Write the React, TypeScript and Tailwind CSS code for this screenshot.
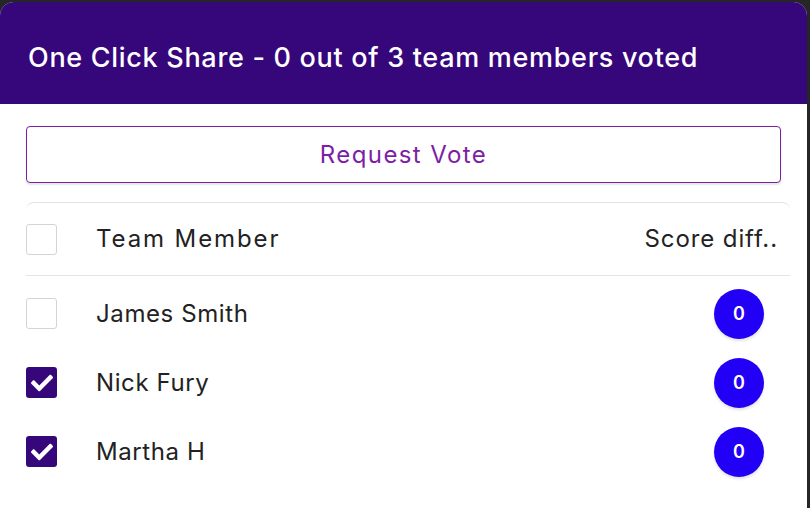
import React from "react";
import { FaCheck } from "react-icons/fa";

type Member = { name: string; checked: boolean; score: number };

const members: Member[] = [
  { name: "James Smith", checked: false, score: 0 },
  { name: "Nick Fury", checked: true, score: 0 },
  { name: "Martha H", checked: true, score: 0 },
];

function Box({ checked }: { checked: boolean }) {
  if (!checked) {
    return <div className="w-[31px] h-[31px] rounded-[3px] border border-[#d4d4d4] bg-white shrink-0" />;
  }
  return (
    <div className="w-[31px] h-[31px] rounded-[3px] bg-[#35077b] flex items-center justify-center shrink-0">
      <FaCheck className="text-white w-[22px] h-[22px]" />
    </div>
  );
}

export default function App() {
  return (
    <div className="w-[810px] h-[508px] bg-[#262626] pt-[2px] overflow-hidden" style={{ fontFamily: "Inter, 'Open Sans', sans-serif" }}>
      <div className="w-[807px] h-[520px] bg-white rounded-[14px] overflow-hidden">
        <div className="h-[102px] bg-[#35077b] flex items-center pt-[10px] px-[28px]">
          <h1 className="text-white text-[27px] font-medium tracking-[0.7px]">
            One Click Share - 0 out of 3 team members voted
          </h1>
        </div>

        <div className="px-[26px] pt-[22px]">
          <button className="w-[755px] h-[57px] rounded-[4px] border border-[#7d1fa3] text-[#7d1fa3] text-[24px] tracking-[1.4px] shadow-[0_2px_2px_rgba(0,0,0,0.1)] bg-white">
            Request Vote
          </button>

          <div className="mt-[19px] w-[764px] border-t border-[#e2e2e2] rounded-t-[8px] text-[24px] tracking-[0.6px] text-[#222]">
            <div className="h-[73px] flex items-center border-b border-[#e4e4e4]">
              <Box checked={false} />
              <span className="ml-[39px] tracking-[1.9px]">Team Member</span>
              <span className="ml-auto mr-[12px] tracking-[0.9px]">Score diff..</span>
            </div>

            <div className="flex flex-col pt-[3px]">
              {members.map((m) => (
                <div key={m.name} className="h-[69px] flex items-center">
                  <Box checked={m.checked} />
                  <span className="ml-[39px]">{m.name}</span>
                  <div className="ml-auto mr-[26px] w-[50px] h-[50px] rounded-full bg-[#2200f5] flex items-center justify-center text-white text-[18px] tracking-normal font-semibold shadow-[0_2px_3px_rgba(0,0,0,0.12)]">
                    {m.score}
                  </div>
                </div>
              ))}
            </div>
          </div>
        </div>
      </div>
    </div>
  );
}
